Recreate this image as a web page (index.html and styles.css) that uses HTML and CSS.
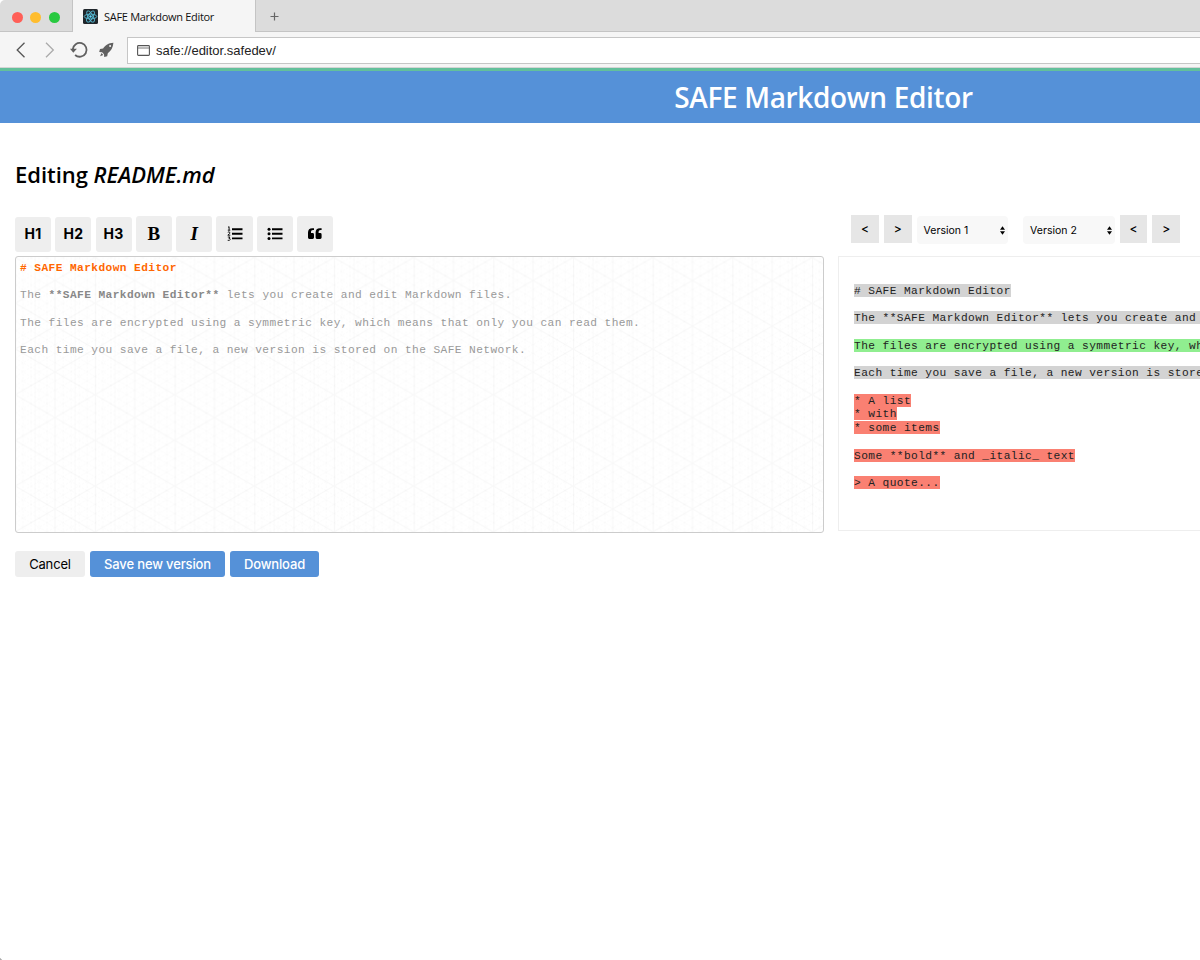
FILE: index.html
```html
<!DOCTYPE html>
<html lang="en">
<head>
<meta charset="utf-8">
<title>SAFE Markdown Editor</title>
<link rel="stylesheet" href="styles.css">
</head>
<body>
<div class="window">
  <div class="tabbar">
    <div class="lights"><i class="light red"></i><i class="light yellow"></i><i class="light green"></i></div>
    <div class="tab">
      <svg class="favicon" viewBox="0 0 15 15"><rect width="15" height="15" rx="1.5" fill="#20262b"/><g fill="none" stroke="#55b9d3" stroke-width=".9"><ellipse cx="7.5" cy="7.5" rx="6.3" ry="2.4"/><ellipse cx="7.5" cy="7.5" rx="6.3" ry="2.4" transform="rotate(60 7.5 7.5)"/><ellipse cx="7.5" cy="7.5" rx="6.3" ry="2.4" transform="rotate(120 7.5 7.5)"/></g><circle cx="7.5" cy="7.5" r="1.2" fill="#61dafb"/></svg>
      <span class="tab-title">SAFE Markdown Editor</span>
    </div>
    <div class="newtab"><svg width="9" height="9" viewBox="0 0 9 9"><path d="M4.5 .5v8M.5 4.5h8" stroke="#666" stroke-width="1.2"/></svg></div>
  </div>
  <div class="navbar">
    <svg class="nav-icons" viewBox="0 0 127 32" fill="none">
      <path d="M24.500 8.700 17.200 16l7.300 7.300" stroke="#555" stroke-width="1.300"/>
      <path d="M46 8.700l7.300 7.300-7.300 7.300" stroke="#aaa" stroke-width="1.300"/>
      <path d="M72.800 15.400a6.900 6.900 0 1 1 2.300 5.600" stroke="#606060" stroke-width="1.800"/>
      <path d="M70 14.800h6.900l-3.600 4z" fill="#606060"/>
      <path d="M113.400 8.800c-5 .3-7.900 2.600-10.300 5.700l-3.100.6-.8 3 2.900.2 1.900 1.900.2 2.900 3-.8.600-3.100c3.200-2.400 5.300-5.500 5.600-10.400zM101.500 19.100l-1.400 3.200 3.200-1.400z" fill="#606060"/>
      <circle cx="110.100" cy="12.100" r="1" fill="#f5f5f5"/>
    </svg>
    <div class="address">
      <svg width="13" height="11" viewBox="0 0 13 11"><rect x=".6" y=".6" width="11.800" height="9.800" rx=".8" fill="none" stroke="#555" stroke-width="1.100"/><path d="M1 3h11" stroke="#777"/></svg>
      <span class="url">safe://editor.safedev/</span>
    </div>
  </div>
  <header class="banner"><h1>SAFE Markdown Editor</h1></header>
  <main class="page">
    <h2 class="heading">Editing <em>README.md</em></h2>
    <div class="columns">
      <section class="editor-col">
        <div class="tools">
          <button class="tool head">H1</button><button class="tool head">H2</button><button class="tool head">H3</button>
          <button class="tool serif">B</button><button class="tool serif ital">I</button>
          <button class="tool"><svg width="16" height="16" viewBox="0 0 16 16"><path d="M5 3.200h10.500M5 7.800h10.500M5 12.400h10.500" stroke="#000" stroke-width="1.900"/><path d="M1 1.300l1.100-.6v3.500M.8 4.200h2.500M.8 6.300q1.300-1 2 0t-2 2.900h2.500M.8 11h2.200l-1.100 1.300q1.400 0 1.300 1.200t-2.500.8" fill="none" stroke="#000" stroke-width=".9"/></svg></button>
          <button class="tool"><svg width="16" height="16" viewBox="0 0 16 16"><path d="M5 3.200h10.500M5 7.800h10.500M5 12.400h10.500" stroke="#000" stroke-width="1.900"/><g><circle cx="2" cy="3.200" r="1.500"/><circle cx="2" cy="7.800" r="1.500"/><circle cx="2" cy="12.400" r="1.500"/></g></svg></button>
          <button class="tool"><svg width="16" height="16" viewBox="0 0 16 16"><path id="q" d="M7 2.200v1.900H6C4.700 4.100 4 5 4 6.300v.7h1.600Q7 7 7 8.400v3.200Q7 13 5.600 13H2.300Q1 13 1 11.600V6.600Q1 2.200 5.400 2.200z"/><use href="#q" x="7.600"/></svg></button>
        </div>
        <div class="editor">
          <svg class="grid" width="100%" height="100%">
            <defs><pattern id="iso" width="79.680" height="45.700" patternUnits="userSpaceOnUse" x="-0.800" y="0.600">
              <g fill="none" stroke="#000">
                <path stroke-opacity=".014" stroke-dasharray="2 1.500" stroke-width=".8" d="M8 0v46M16 0v46M24 0v46M32 0v46M48 0v46M56 0v46M64 0v46M72 0v46M0 9.140 15.940 0M0 18.280 31.870 0M0 27.420 47.810 0M0 36.560 63.740 0M15.940 45.700 79.680 9.140M31.870 45.700 79.680 18.280M47.810 45.700 79.680 27.420M63.740 45.700 79.680 36.560M0 9.140 63.740 45.700M0 18.280 47.810 45.700M0 27.420 31.870 45.700M0 36.560 15.940 45.700M15.940 0 79.680 36.560M31.870 0 79.680 27.420M47.810 0 79.680 18.280M63.740 0 79.680 9.140"/>
                <path stroke-opacity=".014" d="M20 0v46M59.800 0v46"/>
                <path stroke-opacity=".028" d="M.5 0v46M39.840 0v46M0 0 79.680 45.700M0 45.700 79.680 0"/>
              </g></pattern></defs>
            <rect width="100%" height="100%" fill="url(#iso)"/>
          </svg>
<pre class="source"><b class="title"># SAFE Markdown Editor</b>

The <b>**SAFE Markdown Editor**</b> lets you create and edit Markdown files.

The files are encrypted using a symmetric key, which means that only you can read them.

Each time you save a file, a new version is stored on the SAFE Network.</pre>
        </div>
        <div class="actions"><button class="btn cancel">Cancel</button><button class="btn save">Save new version</button><button class="btn download">Download</button></div>
      </section>
      <section class="diff-col">
        <div class="versions">
          <button class="step">&lt;</button><button class="step">&gt;</button>
          <div class="select"><span>Version 1</span><svg width="5" height="9" viewBox="0 0 6 10"><path d="M0 4 3 0l3 4zM0 6h6L3 10z"/></svg></div>
          <div class="select second"><span>Version 2</span><svg width="5" height="9" viewBox="0 0 6 10"><path d="M0 4 3 0l3 4zM0 6h6L3 10z"/></svg></div>
          <button class="step">&lt;</button><button class="step">&gt;</button>
        </div>
        <div class="diff">
<pre><span class="same"># SAFE Markdown Editor</span>

<span class="same">The **SAFE Markdown Editor** lets you create and edit Markdown files.</span>

<span class="added">The files are encrypted using a symmetric key, which means that only you can read them.</span>

<span class="same">Each time you save a file, a new version is stored on the SAFE Network.</span>

<span class="removed">* A list</span>
<span class="removed">* with</span>
<span class="removed">* some items</span>

<span class="removed">Some **bold** and _italic_ text</span>

<span class="removed">&gt; A quote...</span></pre>
        </div>
      </section>
    </div>
  </main>
  <i class="corner"></i>
</div>
</body>
</html>
```
FILE: styles.css
```css
* { box-sizing: border-box; }
html, body { margin: 0; height: 100%; }
body { overflow: hidden; background: #fff; font-family: Inter, sans-serif; color: #000; }
button { border: 0; padding: 0; margin: 0; color: #000; font-family: Inter, sans-serif; display: flex; align-items: center; justify-content: center; flex: none; }
svg { display: block; flex: none; }
pre { margin: 0; font-family: "Liberation Mono", monospace; font-size: 11.200px; letter-spacing: .415px; line-height: 13.750px; }
.window { position: relative; width: 100%; height: 960px; overflow: hidden; }
.tabbar, .navbar, .banner, .page { width: 1647px; }

.tabbar { height: 32px; display: flex; background: #dcdcdc; border-top-left-radius: 5px; }
.lights { width: 73px; display: flex; gap: 7.400px; padding: 12px 0 0 12px; border-right: 1px solid #c4c4c4; border-bottom: 1px solid #c4c4c4; }
.light { width: 11px; height: 11px; border-radius: 50%; }
.red { background: #ff5f57; }
.yellow { background: #ffbd2e; }
.green { background: #28c940; }
.tab { width: 182px; display: flex; align-items: center; gap: 6px; padding-left: 10px; background: #f5f5f5; }
.favicon { width: 15px; height: 15px; }
.tab-title { font: 11px "Open Sans", sans-serif; letter-spacing: -.3px; color: #111; white-space: nowrap; }
.newtab { flex: 1; padding: 12px 0 0 14px; border-left: 1px solid #c4c4c4; border-bottom: 1px solid #c4c4c4; }

.navbar { height: 36px; display: flex; background: #f5f5f5; border-bottom: 1px solid #d5d5d5; padding-top: 2px; }
.nav-icons { width: 127px; height: 32px; }
.address { height: 27px; margin-top: 3px; flex: 1; display: flex; align-items: center; gap: 6.500px; padding-left: 8.500px; background: #fff; border: 1px solid #c6c6c6; }
.url { font: 13px "Liberation Sans", sans-serif; color: #222; }

.banner { height: 55px; border-top: 3px solid #63c09b; background: #5591d8; display: flex; justify-content: center; align-items: center; }
.banner h1 { margin: 0; font: 600 28px/36px "Open Sans", sans-serif; letter-spacing: -.35px; color: #fff; white-space: nowrap; }

.page { padding: 35px 15px 0; }
.heading { margin: 0; height: 58px; font: 600 22px/32px "Open Sans", sans-serif; letter-spacing: -.03px; }
.columns { display: flex; gap: 14px; }
.editor-col { width: 809px; flex: none; }
.tools { height: 40px; display: flex; align-items: flex-start; gap: 4.100px; }
.tool { width: 36.200px; height: 36px; background: #eee; border-radius: 3px; }
.head { height: 35px; margin-top: 1px; padding-bottom: 2px; font-size: 14px; letter-spacing: .35px; font-weight: 700; }
.serif { font: bold 19px "Liberation Serif", serif; }
.ital { font-style: italic; }
.editor { position: relative; height: 277px; border: 1px solid #ccc; border-radius: 3px; overflow: hidden; }
.grid { position: absolute; inset: 0; }
.source { position: relative; padding: 4.500px 4px; color: #999; letter-spacing: .415px; }
.source b { color: #888; }
.source .title { color: #f60; }
.actions { display: flex; gap: 5px; padding-top: 18px; }
.btn { height: 26px; border-radius: 3px; font-size: 13px; letter-spacing: -.15px; font-weight: 500; background: #5591d8; color: #fff; }
.cancel { width: 70px; background: #eee; color: #000; font-weight: 400; }
.save { width: 135px; }
.download { width: 89px; }

.diff-col { flex: 1; min-width: 0; }
.versions { height: 40px; display: flex; gap: 5px; padding-left: 13px; align-items: flex-start; }
.step { width: 27.800px; height: 28px; margin-top: -1px; padding-bottom: 1px; background: #e6e6e6; font-size: 12px; font-weight: 500; }
.select { width: 91.500px; height: 28px; padding: 0 3px 0 7px; display: flex; align-items: center; justify-content: space-between; border-radius: 4px; background: #f8f8f8; font-size: 10.500px; }
.second { margin-left: 10px; }
.diff { height: 275px; border: 1px solid #eee; padding: 27px 15px; }
.diff span { padding: .5px 0; }
.diff pre { color: #222; }
.same { background: #d3d3d3; }
.added { background: #90ee90; }
.removed { background: #fa8072; }
.corner { position: absolute; left: 0; bottom: 0; width: 4px; height: 4px; background: radial-gradient(circle at 100% 0, transparent 3.800px, #aaa 4.500px); }
```
